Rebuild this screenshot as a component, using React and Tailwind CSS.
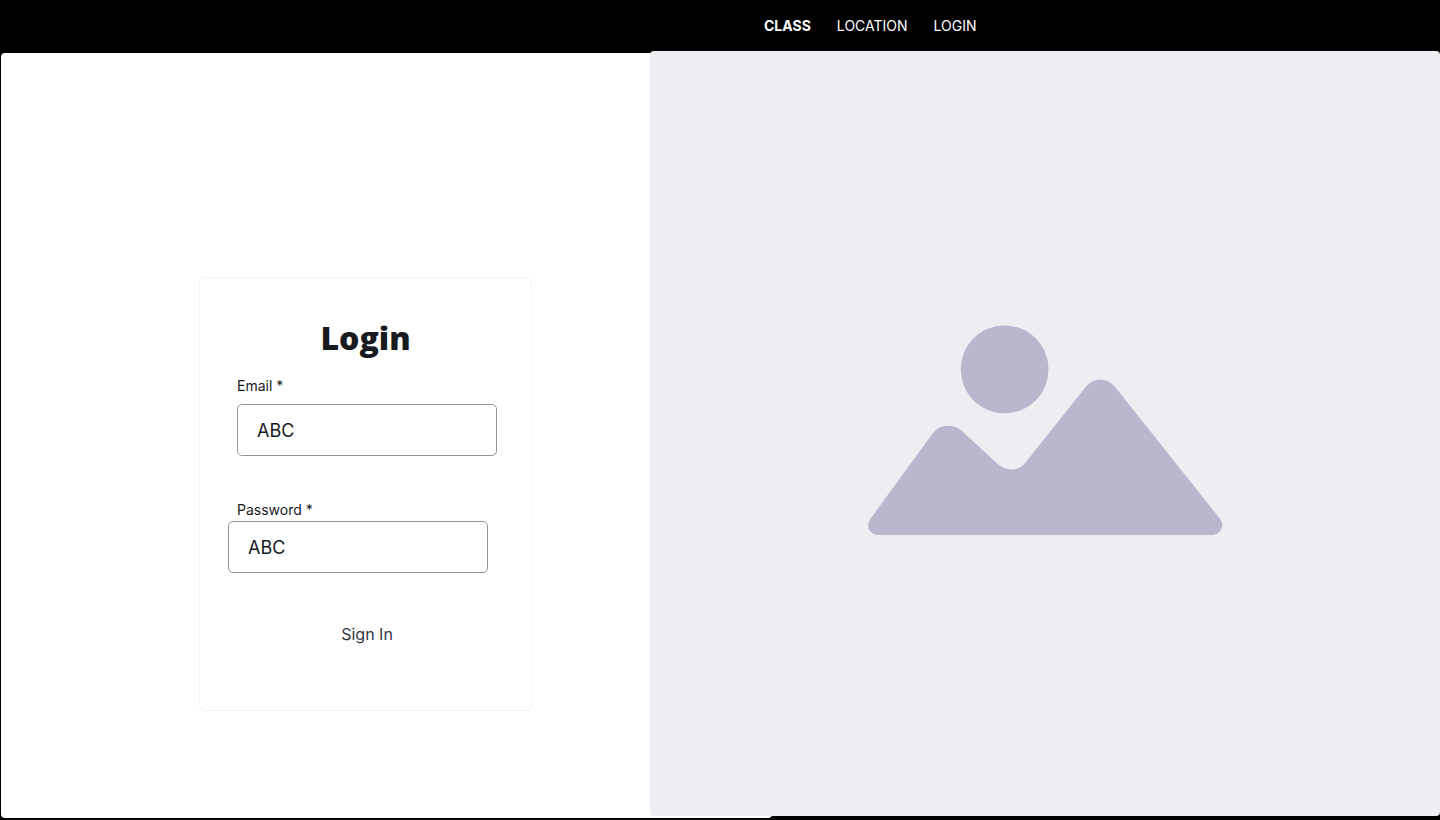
function Field({ id, label, type, labelClass, inputClass }) {
  return (
    <>
      <label htmlFor={id} className={`text-sm leading-5 ${labelClass}`}>
        {label}
      </label>
      <input
        id={id}
        type={type}
        defaultValue="ABC"
        className={`h-[52px] min-w-0 rounded-[5px] border border-[#9095a1] bg-white px-[19px] text-lg outline-none ${inputClass}`}
      />
    </>
  );
}

function LoginForm() {
  return (
    <form
      className="flex w-[333px] flex-col rounded-md border border-[#f3f4f6] bg-white pt-10 pb-[63px]"
      onSubmit={(e) => e.preventDefault()}
    >
      <h1 className="text-center font-['Open_Sans',sans-serif] text-[32px] leading-10 font-extrabold">Login</h1>
      <div className="mt-[18px] flex flex-col pr-[34px] pl-7">
        <Field id="email" label="Email *" type="text" labelClass="ml-[9px]" inputClass="mt-2 ml-[9px]" />
        <Field id="password" label="Password *" type="text" labelClass="mt-11 ml-[9px]" inputClass="mt-px mr-[9px]" />
        <button type="submit" className="mt-12 ml-[9px] h-[26px] self-stretch text-base text-[#323842]">
          Sign In
        </button>
      </div>
    </form>
  );
}

function Landscape() {
  return (
    <svg viewBox="0 0 356 211" className="w-[45%]" fill="#b9b6ce" aria-hidden="true">
      <circle cx="137" cy="44.5" r="44" />
      <path d="M65 108.500 C72 99 86 99 94 106 L130 139.500 C138 147 151 147 158 138 L218 62.500 C226 52.500 240 52.500 248 62.500 L353.500 195 C358 202 353 210.500 345 210.500 H10 C2 210.500 -2.500 202 2 195 Z" />
    </svg>
  );
}

export default function App() {
  return (
    <div className="flex min-h-screen flex-col bg-black font-['Inter',sans-serif] text-[#171a1f]">
      <header className="grid h-[51px] grid-cols-[764fr_676fr] items-center text-sm text-white">
        <nav className="col-start-2 flex gap-[26px]" aria-label="Main">
          <a href="#class" className="font-bold">CLASS</a>
          <a href="#location">LOCATION</a>
          <a href="#login">LOGIN</a>
        </nav>
      </header>
      <main className="grid grow grid-cols-[650fr_122fr_668fr]">
        <section className="col-span-2 col-start-1 row-start-1 mt-0.5 mb-0.5 ml-px flex rounded bg-white pt-56 pb-[107px] pl-[198px]">
          <LoginForm />
        </section>
        <section className="z-10 col-span-2 col-start-2 row-start-1 mb-1 flex items-center justify-center rounded bg-[#eeedf2] pb-1.5 pl-px">
          <Landscape />
        </section>
      </main>
    </div>
  );
}
